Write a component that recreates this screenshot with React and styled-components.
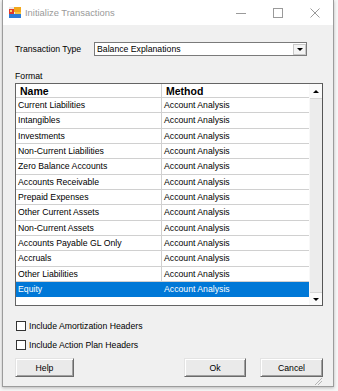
import React from 'react';
import styled, { createGlobalStyle } from 'styled-components';

const GlobalStyle = createGlobalStyle`
  html, body {
    margin: 0;
    padding: 0;
    background: #f6f6f6;
    font-family: "Liberation Sans", Arial, sans-serif;
  }
`;

// Desktop strip behind the dialog
const Page = styled.div`
  width: 338px;
  height: 391px;
  overflow: hidden;
  background: #f6f6f6;
`;

const Window = styled.div`
  margin-left: 2px;
  width: 332px;
  height: 387px;
  box-sizing: border-box;
  border: 1px solid #9c9c9c;
  border-top: none;
  background: #f0f0f0;
  box-shadow: 0 1px 3px rgba(0, 0, 0, 0.25);
  display: flex;
  flex-direction: column;
`;

const TitleBar = styled.div`
  height: 25px;
  flex: none;
  background: #fff;
  display: flex;
  align-items: center;
  padding-left: 6px;
`;

const TitleText = styled.span`
  margin-left: 4px;
  font-size: 9.4px;
  color: #9a9a9a;
  flex: 1;
`;

const CaptionButton = styled.div`
  width: 37px;
  height: 25px;
  display: flex;
  align-items: center;
  justify-content: center;
`;

const Body = styled.div`
  flex: 1;
  display: flex;
  flex-direction: column;
  padding: 17px 10px 0 12px;
  font-size: 8.7px;
  color: #000;
`;

const TypeRow = styled.div`
  display: flex;
  align-items: center;
  height: 14px;
`;

const Label = styled.span`
  width: 79px;
  white-space: nowrap;
`;

const Combo = styled.div`
  width: 213px;
  height: 14px;
  box-sizing: border-box;
  border: 1px solid #7a7a7a;
  background: #fff;
  display: flex;
  align-items: center;
  padding-left: 2px;
`;

const ComboText = styled.span`
  flex: 1;
`;

const ComboButton = styled.div`
  width: 13px;
  height: 11px;
  box-sizing: border-box;
  border: 1px solid #c9c9c9;
  background: #f4f4f4;
  display: flex;
  align-items: center;
  justify-content: center;
  margin-right: 0px;
`;

const DownTri = styled.div`
  width: 0;
  height: 0;
  border-left: 3px solid transparent;
  border-right: 3px solid transparent;
  border-top: 3px solid #000;
`;

const UpTri = styled.div`
  width: 0;
  height: 0;
  border-left: 3px solid transparent;
  border-right: 3px solid transparent;
  border-bottom: 3px solid #000;
`;

const FormatLabel = styled.div`
  margin-top: 15px;
  line-height: 10px;
`;

const GridBox = styled.div`
  margin-top: 2px;
  width: 308px;
  height: 223px;
  box-sizing: border-box;
  border: 1px solid #646464;
  border-right-color: #555;
  background: #fff;
  display: flex;
`;

const Table = styled.div`
  width: 293px;
  display: flex;
  flex-direction: column;
`;

const Row = styled.div`
  display: grid;
  grid-template-columns: 146px 147px;
  height: ${({ $header }) => ($header ? '14px' : '15.33px')};
  box-sizing: border-box;
  border-bottom: 1px solid ${({ $selected }) => ($selected ? '#0078d7' : '#d0d0d0')};
  background: ${({ $selected }) => ($selected ? '#0078d7' : '#fff')};
  color: ${({ $selected }) => ($selected ? '#fff' : '#000')};
  font-weight: ${({ $header }) => ($header ? 700 : 400)};
  font-size: ${({ $header }) => ($header ? '10.5px' : '8.7px')};
`;

const Cell = styled.div`
  display: flex;
  align-items: center;
  padding-left: ${({ $header }) => ($header ? '4px' : '2px')};
  white-space: nowrap;
  overflow: hidden;
  border-right: 1px solid ${({ $selected, $last }) =>
    $last ? 'transparent' : $selected ? '#0078d7' : '#d0d0d0'};
`;

const Scrollbar = styled.div`
  width: 13px;
  background: #ececec;
  border-left: 1px solid #f8f8f8;
  display: flex;
  flex-direction: column;
  justify-content: space-between;
`;

const ScrollButton = styled.div`
  height: ${({ $h }) => $h}px;
  background: #fafafa;
  border-top: ${({ $down }) => ($down ? '1px solid #d6d6d6' : 'none')};
  border-bottom: ${({ $down }) => ($down ? 'none' : '1px solid #d6d6d6')};
  display: flex;
  align-items: center;
  justify-content: center;
`;

const CheckRow = styled.label`
  display: flex;
  align-items: center;
  height: 11px;
  margin-top: ${({ $mt }) => $mt}px;
`;

const CheckBox = styled.span`
  width: 10px;
  height: 10px;
  box-sizing: border-box;
  border: 1px solid #333;
  background: #fff;
  margin: 0 3px 0 1px;
`;

const ButtonRow = styled.div`
  display: flex;
  margin-top: 8px;
  width: 308px;
`;

const Button = styled.div`
  width: ${({ $w }) => $w}px;
  height: 19px;
  box-sizing: border-box;
  margin-left: ${({ $ml }) => $ml || 0}px;
  border: 1px solid;
  border-color: #e3e3e3 #6a6a6a #6a6a6a #e3e3e3;
  box-shadow: inset 1px 1px #fff, inset -1px -1px #a0a0a0;
  background: #eaeaea;
  display: flex;
  align-items: center;
  justify-content: center;
  font-size: 8.7px;
`;

const Grip = styled.div`
  align-self: flex-end;
  margin-top: auto;
  margin-right: 1px;
  margin-bottom: 1px;
  width: 8px;
  height: 8px;
  background: linear-gradient(135deg, transparent 55%, #b5b5b5 55%, #b5b5b5 62%, transparent 62%, transparent 72%, #b5b5b5 72%, #b5b5b5 79%, transparent 79%);
`;

const AppIcon = () => (
  <svg width="12" height="11" viewBox="0 0 12 11">
    <rect x="0" y="0" width="12" height="11" fill="#e8e8e8" />
    <rect x="0" y="2" width="5" height="5" fill="#e03a2c" />
    <rect x="5" y="0" width="7" height="5" fill="#f2a81d" />
    <rect x="1" y="3" width="2" height="2" fill="#f7d36b" />
    <rect x="0" y="7" width="12" height="4" fill="#2b7bd6" />
    <rect x="6" y="5" width="6" height="2" fill="#f6c640" />
  </svg>
);

const rows = [
  'Current Liabilities',
  'Intangibles',
  'Investments',
  'Non-Current Liabilities',
  'Zero Balance Accounts',
  'Accounts Receivable',
  'Prepaid Expenses',
  'Other Current Assets',
  'Non-Current Assets',
  'Accounts Payable GL Only',
  'Accruals',
  'Other Liabilities',
  'Equity',
];

export default function App() {
  return (
    <Page>
      <GlobalStyle />
      <Window>
        <TitleBar>
          <AppIcon />
          <TitleText>Initialize Transactions</TitleText>
          <CaptionButton>
            <svg width="10" height="10" viewBox="0 0 10 10">
              <line x1="0" y1="5.5" x2="10" y2="5.5" stroke="#9a9a9a" strokeWidth="1" />
            </svg>
          </CaptionButton>
          <CaptionButton>
            <svg width="10" height="10" viewBox="0 0 10 10">
              <rect x="0.5" y="0.5" width="9" height="9" fill="none" stroke="#9a9a9a" strokeWidth="1" />
            </svg>
          </CaptionButton>
          <CaptionButton>
            <svg width="10" height="10" viewBox="0 0 10 10">
              <path d="M0.5 0.5 L9.5 9.5 M9.5 0.5 L0.5 9.5" stroke="#9a9a9a" strokeWidth="1" />
            </svg>
          </CaptionButton>
        </TitleBar>
        <Body>
          <TypeRow>
            <Label>Transaction Type</Label>
            <Combo>
              <ComboText>Balance Explanations</ComboText>
              <ComboButton>
                <DownTri />
              </ComboButton>
            </Combo>
          </TypeRow>
          <FormatLabel>Format</FormatLabel>
          <GridBox>
            <Table>
              <Row $header>
                <Cell $header>Name</Cell>
                <Cell $header $last>Method</Cell>
              </Row>
              {rows.map((name) => {
                const sel = name === 'Equity';
                return (
                  <Row key={name} $selected={sel}>
                    <Cell $selected={sel}>{name}</Cell>
                    <Cell $selected={sel} $last>Account Analysis</Cell>
                  </Row>
                );
              })}
            </Table>
            <Scrollbar>
              <ScrollButton $h={14}>
                <UpTri />
              </ScrollButton>
              <ScrollButton $h={12} $down>
                <DownTri />
              </ScrollButton>
            </Scrollbar>
          </GridBox>
          <CheckRow $mt={14}>
            <CheckBox />
            Include Amortization Headers
          </CheckRow>
          <CheckRow $mt={8}>
            <CheckBox />
            Include Action Plan Headers
          </CheckRow>
          <ButtonRow>
            <Button $w={59}>Help</Button>
            <Button $w={62} $ml={110}>Ok</Button>
            <Button $w={63} $ml={14}>Cancel</Button>
          </ButtonRow>
          <Grip />
        </Body>
      </Window>
    </Page>
  );
}
